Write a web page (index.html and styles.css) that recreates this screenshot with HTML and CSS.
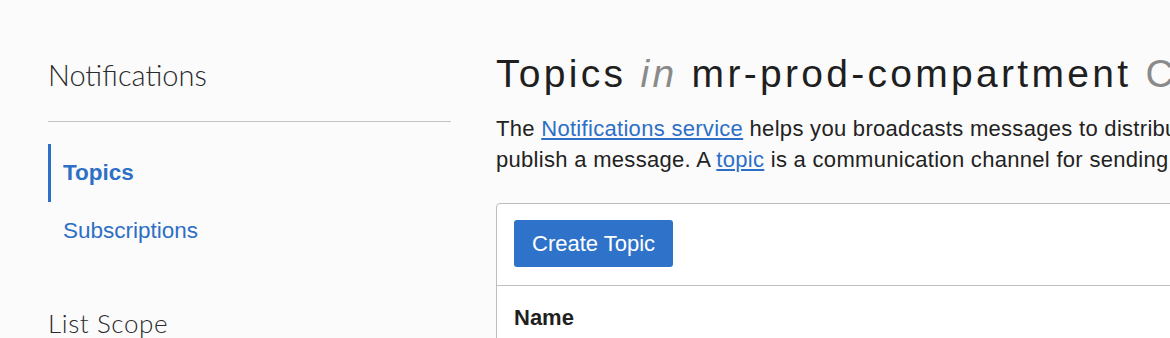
FILE: index.html
```
<!DOCTYPE html>
<html lang="en">
<head>
<meta charset="utf-8"/>
<meta content="width=device-width, initial-scale=1.0" name="viewport"/>
<title>Notifications - Topics</title>
<link rel="stylesheet" href="styles.css">
</head>
<body>
<div class="layout">
  <aside class="sidebar">
    <h2 class="side-title">Notifications</h2>
    <nav class="side-nav">
      <a class="nav-item active" href="#">Topics</a>
      <a class="nav-item" href="#">Subscriptions</a>
    </nav>
    <h3 class="side-sub">List Scope</h3>
  </aside>

  <main class="content">
    <h1 class="page-title">Topics <em>in</em> mr-prod-compartment <span class="muted">Compartment</span></h1>
    <p class="intro">
      The <a href="#">Notifications service</a> helps you broadcasts messages to distributed components whenever you<br/>
      publish a message. A <a href="#">topic</a> is a communication channel for sending messages to its subscriptions.
    </p>

    <div class="card">
      <div class="toolbar">
        <button class="btn-primary" type="button">Create Topic</button>
      </div>
      <div class="table-head">
        <span class="col-name">Name</span>
      </div>
    </div>
  </main>
</div>
</body>
</html>
```
FILE: styles.css
```
body {
  margin: 0;
  background: #fbfbfb;
  color: #222222;
  font-family: "Liberation Sans", Arial, sans-serif;
  overflow: hidden;
}
.layout {
  display: flex;
  gap: 45px;
  padding-left: 48px;
}
.sidebar {
  flex: none;
  width: 403px;
}
.side-title {
  margin: 57px 0 0;
  padding-bottom: 28px;
  border-bottom: 1px solid #c4c4c6;
  font-family: Lato, "Liberation Sans", sans-serif;
  font-weight: 300;
  font-size: 29px;
  line-height: 36px;
  color: #2a2a2a;
}
.side-nav {
  display: flex;
  flex-direction: column;
  margin-top: 22px;
}
.nav-item {
  display: flex;
  align-items: center;
  height: 58px;
  padding-left: 12px;
  border-left: 3px solid transparent;
  font-size: 22.5px;
  color: #2d6fc6;
  text-decoration: none;
}
.nav-item.active {
  border-left-color: #2d6fc6;
  font-weight: bold;
}
.side-sub {
  margin: 48px 0 0;
  font-family: Lato, "Liberation Sans", sans-serif;
  font-weight: 300;
  font-size: 26px;
  line-height: 30px;
  letter-spacing: 0.6px;
  color: #2a2a2a;
}
.content {
  flex: none;
  width: 1000px;
}
.page-title {
  margin: 51px 0 0;
  font-weight: normal;
  font-size: 39px;
  line-height: 45px;
  letter-spacing: 3.3px;
  color: #1f1f1f;
  white-space: nowrap;
}
.page-title em {
  color: #8a8a8a;
}
.page-title .muted {
  color: #8a8a8a;
}
.intro {
  margin: 17px 0 0;
  font-size: 22px;
  line-height: 31px;
  letter-spacing: 0.3px;
  color: #222222;
  white-space: nowrap;
}
.intro a {
  color: #2d6fc6;
}
.card {
  margin-top: 28px;
  background: #ffffff;
  border: 1px solid #bdbdc1;
  border-radius: 4px;
}
.toolbar {
  padding: 16px 17px 18px;
  border-bottom: 1px solid #bfbfc3;
}
.btn-primary {
  height: 47px;
  padding: 0 18px;
  border: none;
  border-radius: 3px;
  background: #2f72c9;
  color: #ffffff;
  font-family: "Liberation Sans", Arial, sans-serif;
  font-size: 22px;
}
.table-head {
  padding: 19px 17px 20px;
}
.col-name {
  font-size: 22px;
  line-height: 26px;
  font-weight: bold;
  color: #1f1f1f;
}
```
